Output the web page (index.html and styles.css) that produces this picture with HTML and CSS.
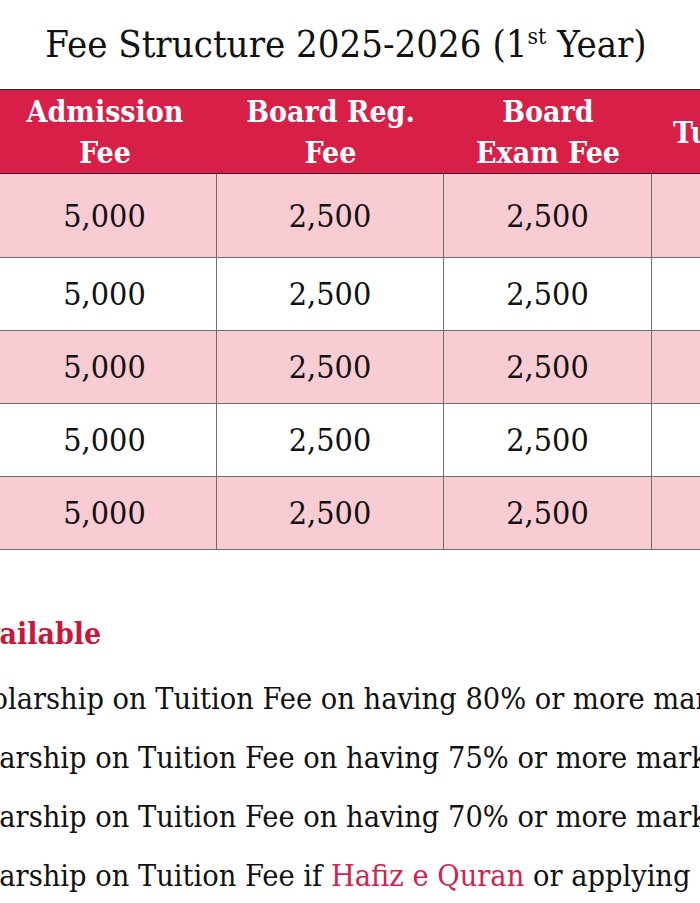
FILE: index.html
```html
<!DOCTYPE html>
<html lang="en">
<head>
<meta charset="utf-8">
<title>Fee Structure 2025-2026</title>
<link rel="stylesheet" href="styles.css">
</head>
<body>
<main class="page">
  <h1 class="title">Fee Structure 2025-2026 (1<sup>st</sup> Year)</h1>
  <div class="table-wrap">
    <table class="fees">
      <thead>
        <tr>
          <th class="c-a">Admission<br>Fee</th>
          <th class="c-b">Board Reg.<br>Fee</th>
          <th class="c-c">Board<br>Exam Fee</th>
          <th class="c-d">Tuition Fee</th>
        </tr>
      </thead>
      <tbody>
        <tr class="pink first"><td>5,000</td><td>2,500</td><td>2,500</td><td></td></tr>
        <tr><td>5,000</td><td>2,500</td><td>2,500</td><td></td></tr>
        <tr class="pink"><td>5,000</td><td>2,500</td><td>2,500</td><td></td></tr>
        <tr><td>5,000</td><td>2,500</td><td>2,500</td><td></td></tr>
        <tr class="pink"><td>5,000</td><td>2,500</td><td>2,500</td><td></td></tr>
      </tbody>
    </table>
  </div>
  <section class="scholar">
    <h2 class="scholar-title">Scholarships Available</h2>
    <ul class="scholar-list">
      <li>100% Scholarship on Tuition Fee on having 80% or more marks</li>
      <li>50% Scholarship on Tuition Fee on having 75% or more marks</li>
      <li>25% Scholarship on Tuition Fee on having 70% or more marks</li>
      <li>50% Scholarship on Tuition Fee if <a class="hl" href="#">Hafiz e Quran</a> or applying on sports quota</li>
    </ul>
  </section>
</main>
</body>
</html>
```
FILE: styles.css
```css
html, body {
  margin: 0;
  padding: 0;
  background: #ffffff;
}
body {
  width: 700px;
  overflow: hidden;
  font-family: "DejaVu Serif Condensed", "DejaVu Serif", serif;
  color: #111111;
}
.page {
  width: 700px;
}
.title {
  margin: 0;
  padding: 22px 8px 23px 0;
  font-size: 38px;
  line-height: 44px;
  font-weight: normal;
  text-align: center;
  color: #111111;
  white-space: nowrap;
}
.title sup {
  font-size: 0.6em;
  line-height: 0;
  vertical-align: 0.55em;
}
.table-wrap {
  margin-left: -7px;
  width: 1000px;
}
.fees {
  border-collapse: separate;
  border-spacing: 0;
  table-layout: fixed;
  width: 870px;
}
.fees th, .fees td {
  box-sizing: border-box;
  padding: 0;
  text-align: center;
  vertical-align: middle;
}
.fees th {
  background: #d81f47;
  color: #ffffff;
  font-weight: bold;
  font-size: 30px;
  line-height: 41px;
  height: 84px;
  padding-top: 1px;
  border-top: 1px solid #2a2a2a;
  border-bottom: 1px solid #3a1a20;
}
.c-a { width: 224px; }
.c-b { width: 227px; }
.c-c { width: 208px; }
.c-d { width: 211px; }
.fees td {
  font-size: 32px;
  height: 73px;
  border-right: 1px solid #6f6f6f;
  border-bottom: 1px solid #6f6f6f;
  background: #ffffff;
}
.fees tr.pink td {
  background: #f9cbd3;
}
.fees tr.first td {
  height: 84px;
}
.scholar {
  margin-top: 64px;
  margin-left: -147px;
}
.scholar-title {
  margin: 0 0 0 -93px;
  font-size: 30px;
  line-height: 40px;
  font-weight: bold;
  color: #c8173c;
  white-space: nowrap;
}
.scholar-list {
  list-style: none;
  margin: 15px 0 0 0;
  padding: 0;
}
.scholar-list li {
  font-size: 30.4px;
  line-height: 59px;
  white-space: nowrap;
}
.hl {
  color: #d0234f;
  text-decoration: none;
}
```
